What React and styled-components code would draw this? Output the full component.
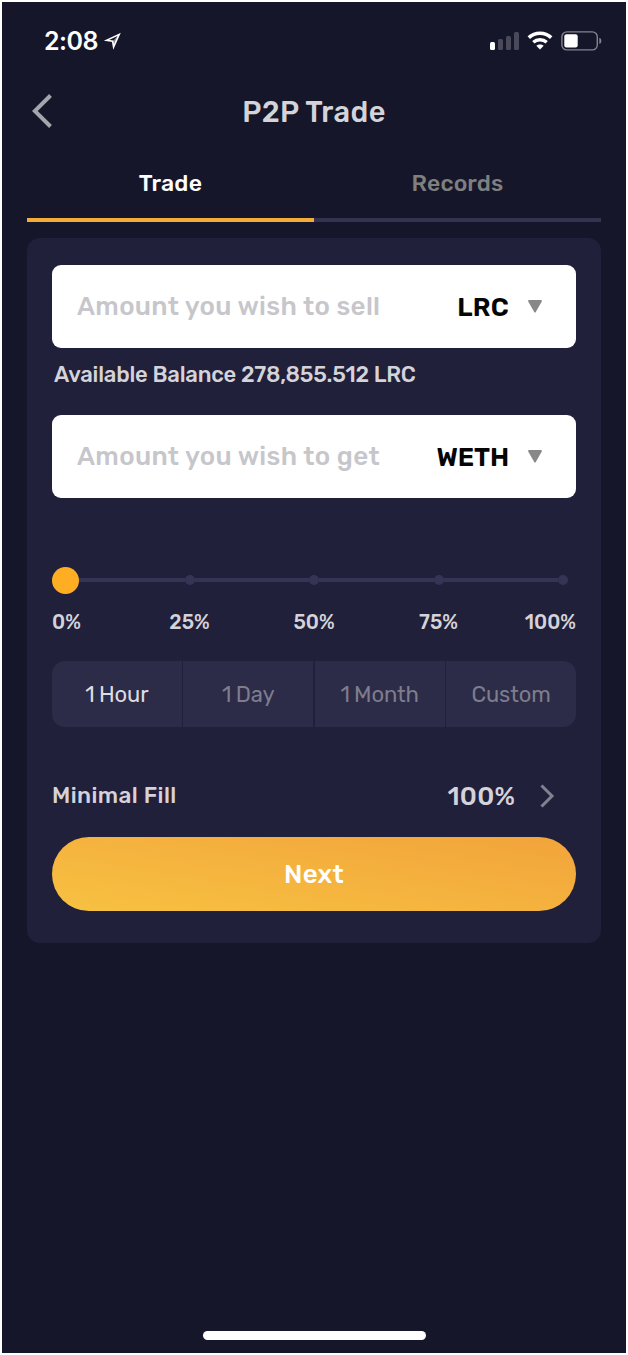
import styled, { createGlobalStyle } from "styled-components";

const GlobalStyle = createGlobalStyle`
    *{ box-sizing:border-box; }
    body{
        margin:0;
        background:#fff;
        font-family:Rubik, Roboto, sans-serif;
    }
`;

const Screen = styled.div`
    width:628px;
    height:1355px;
    border:2px solid #fff;
    background:#15162a;
    display:flex;
    flex-direction:column;
    font-weight:500;
    color:#d4d3d9;
    white-space:nowrap;
`;
const StatusBar = styled.div`
    height:77px;
    padding:0 23px 0 42px;
    display:flex;
    align-items:center;
    justify-content:space-between;
`;
const StatusGroup = styled.div`
    display:flex;
    align-items:center;
    gap:${(props) => props.$gap}px;
`;
const Time = styled.span`
    padding-top:1px;
    font-family:Inter, sans-serif;
    font-size:25px;
    font-weight:600;
    letter-spacing:-0.5px;
    color:#fff;
`;
const Header = styled.div`
    height:65px;
    padding:0 30px 1px;
    display:grid;
    grid-template-columns:40px 1fr 40px;
    align-items:center;
`;
const Title = styled.h1`
    margin:0;
    padding-top:2px;
    text-align:center;
    font-size:29px;
    font-weight:500;
    letter-spacing:0.4px;
`;
const Tabs = styled.div`
    display:flex;
    margin:0 25px;
`;
const Tab = styled.div`
    flex:1;
    height:78px;
    padding-top:26px;
    text-align:center;
    font-size:23px;
    line-height:27px;
    letter-spacing:${(props) => props.$spacing}px;
    color:${(props) => (props.$active ? "#fff" : "#7f7f7f")};
    border-bottom:4px solid ${(props) => (props.$active ? "#f4ac38" : "#33334f")};
`;
const Card = styled.div`
    margin:16px 25px 0;
    height:705px;
    padding:27px 25px;
    border-radius:13px;
    background:#21203b;
`;
const Field = styled.div`
    height:83px;
    padding:0 34px 0 25px;
    border-radius:9px;
    background:#fff;
    display:flex;
    align-items:center;
`;
const Placeholder = styled.span`
    flex:1;
    font-size:26px;
    letter-spacing:${(props) => props.$spacing}px;
    color:#c6c6cb;
`;
const Token = styled.span`
    padding-top:2px;
    margin-right:19px;
    font-size:26px;
    font-weight:600;
    letter-spacing:${(props) => props.$spacing}px;
    color:#050505;
`;
const Balance = styled.div`
    height:67px;
    padding:13px 0 0 2px;
    font-size:22px;
    line-height:27px;
    letter-spacing:-0.2px;
`;
const Slider = styled.div`
    height:28px;
    margin-top:68px;
    padding-right:8px;
    display:flex;
    align-items:center;
`;
const Knob = styled.div`
    position:relative;
    z-index:1;
    width:27px;
    height:27px;
    margin-right:-9px;
    border-radius:50%;
    background:#ffae24;
`;
const Track = styled.div`
    flex:1;
    height:4px;
    background:#353455;
`;
const Dot = styled.div`
    width:10px;
    height:10px;
    border-radius:50%;
    background:#353455;
`;
const Marks = styled.div`
    height:53px;
    margin-top:14px;
    display:grid;
    grid-template-columns:75px 125px 124px 125px 75px;
    font-size:20px;
    line-height:29px;
`;
const Mark = styled.span`
    text-align:${(props) => props.$align};
`;
const Segments = styled.div`
    height:66px;
    display:grid;
    grid-template-columns:repeat(4, 1fr);
    gap:1.5px;
    border-radius:13px;
    overflow:hidden;
`;
const Segment = styled.div`
    display:flex;
    align-items:center;
    justify-content:center;
    background:#2c2b48;
    font-size:22px;
    font-weight:400;
    letter-spacing:-0.1px;
    word-spacing:-1px;
    color:${(props) => (props.$active ? "#dddce2" : "#7e7d8c")};
`;
const FillRow = styled.div`
    height:53px;
    margin:42px 0 15px;
    padding-right:21px;
    display:flex;
    align-items:center;
`;
const FillLabel = styled.span`
    flex:1;
    font-size:22.5px;
    letter-spacing:0.4px;
`;
const FillValue = styled.span`
    padding-top:2px;
    margin-right:24px;
    font-size:26px;
    letter-spacing:0.2px;
`;
const Button = styled.button`
    display:block;
    width:100%;
    height:74px;
    padding:0;
    border:none;
    border-radius:37px;
    background:linear-gradient(9deg, #f7c041 5%, #f2a53b 95%);
    color:#fff;
    font-family:inherit;
    font-size:26px;
    font-weight:500;
    letter-spacing:0.3px;
`;
const HomeBar = styled.div`
    width:223px;
    height:9px;
    margin:auto auto 13px;
    border-radius:5px;
    background:#fff;
`;

const Caret = () => (
  <svg width="14" height="13" viewBox="0 0 14 13">
    <path d="M1 1H13L7 11.6Z" fill="#888" stroke="#888" strokeWidth="1.8" strokeLinejoin="round" />
  </svg>
);

const marks = [
  { label: "0%", align: "left" },
  { label: "25%", align: "center" },
  { label: "50%", align: "center" },
  { label: "75%", align: "center" },
  { label: "100%", align: "right" },
];

const periods = [
  { label: "1 Hour", active: true },
  { label: "1 Day" },
  { label: "1 Month" },
  { label: "Custom" },
];

const App = () => {
  return (
    <>
      <GlobalStyle/>
      <Screen>
        <StatusBar>
          <StatusGroup $gap={5}>
            <Time>2:08</Time>
            <svg width="19" height="18" viewBox="0 0 19 18">
              <path d="M16.2 2.4L3.6 8.4L9.6 9.2L10.6 15Z" fill="none" stroke="#fff" strokeWidth="1.6" strokeMiterlimit="8"/>
              <path d="M16.2 2.4L9.6 9.2L10.6 15Z" fill="#fff" fillOpacity="0.5"/>
            </svg>
          </StatusGroup>
          <StatusGroup $gap={8}>
            <svg width="29" height="19" viewBox="0 0 29 19">
              <rect x="0" y="11" width="5" height="8" rx="1.5" fill="#fff"/>
              <rect x="8" y="8" width="5" height="11" rx="1.5" fill="#494959"/>
              <rect x="16" y="5" width="5" height="14" rx="1.5" fill="#494959"/>
              <rect x="24" y="1" width="5" height="18" rx="1.5" fill="#494959"/>
            </svg>
            <svg width="26" height="19" viewBox="0 0 26 19">
              <path d="M1.8 6.6C8 0.8 18 0.8 24.2 6.6" fill="none" stroke="#fff" strokeWidth="3.6"/>
              <path d="M6.3 11.3C10.1 7.9 15.9 7.9 19.7 11.3" fill="none" stroke="#fff" strokeWidth="3.4"/>
              <path d="M9.3 14.8C11.4 12.9 14.6 12.9 16.7 14.8L13 18.5Z" fill="#fff"/>
            </svg>
            <svg width="42" height="20" viewBox="0 0 42 20">
              <rect x="0.9" y="0.9" width="35.4" height="18" rx="5" fill="none" stroke="#83838e" strokeWidth="1.4"/>
              <rect x="3.3" y="3.3" width="13.4" height="13.2" rx="2.2" fill="#fff"/>
              <path d="M38.3 6.8Q40.4 7.4 40.4 9.9T38.3 13Z" fill="#83838e"/>
            </svg>
          </StatusGroup>
        </StatusBar>
        <Header>
          <svg width="22" height="36" viewBox="0 0 22 36">
            <path d="M18.5 2.5L2.8 18L18.5 33.5" fill="none" stroke="#a5a5ad" strokeWidth="4"/>
          </svg>
          <Title>P2P Trade</Title>
        </Header>
        <Tabs>
          <Tab $active $spacing={0.2}>Trade</Tab>
          <Tab $spacing={0.1}>Records</Tab>
        </Tabs>
        <Card>
          <Field>
            <Placeholder $spacing={0.33}>Amount you wish to sell</Placeholder>
            <Token $spacing={0.3}>LRC</Token>
            <Caret/>
          </Field>
          <Balance>Available Balance 278,855.512 LRC</Balance>
          <Field>
            <Placeholder $spacing={0.35}>Amount you wish to get</Placeholder>
            <Token $spacing={-0.1}>WETH</Token>
            <Caret/>
          </Field>
          <Slider>
            <Knob/>
            <Track/>
            <Dot/>
            <Track/>
            <Dot/>
            <Track/>
            <Dot/>
            <Track/>
            <Dot/>
          </Slider>
          <Marks>
            {marks.map((item) => (
              <Mark key={item.label} $align={item.align}>{item.label}</Mark>
            ))}
          </Marks>
          <Segments>
            {periods.map((item) => (
              <Segment key={item.label} $active={item.active}>{item.label}</Segment>
            ))}
          </Segments>
          <FillRow>
            <FillLabel>Minimal Fill</FillLabel>
            <FillValue>100%</FillValue>
            <svg width="16" height="26" viewBox="0 0 16 26">
              <path d="M2.5 2.5L13 13L2.5 23.5" fill="none" stroke="#82818f" strokeWidth="3"/>
            </svg>
          </FillRow>
          <Button>Next</Button>
        </Card>
        <HomeBar/>
      </Screen>
    </>
  )
}

export default App
